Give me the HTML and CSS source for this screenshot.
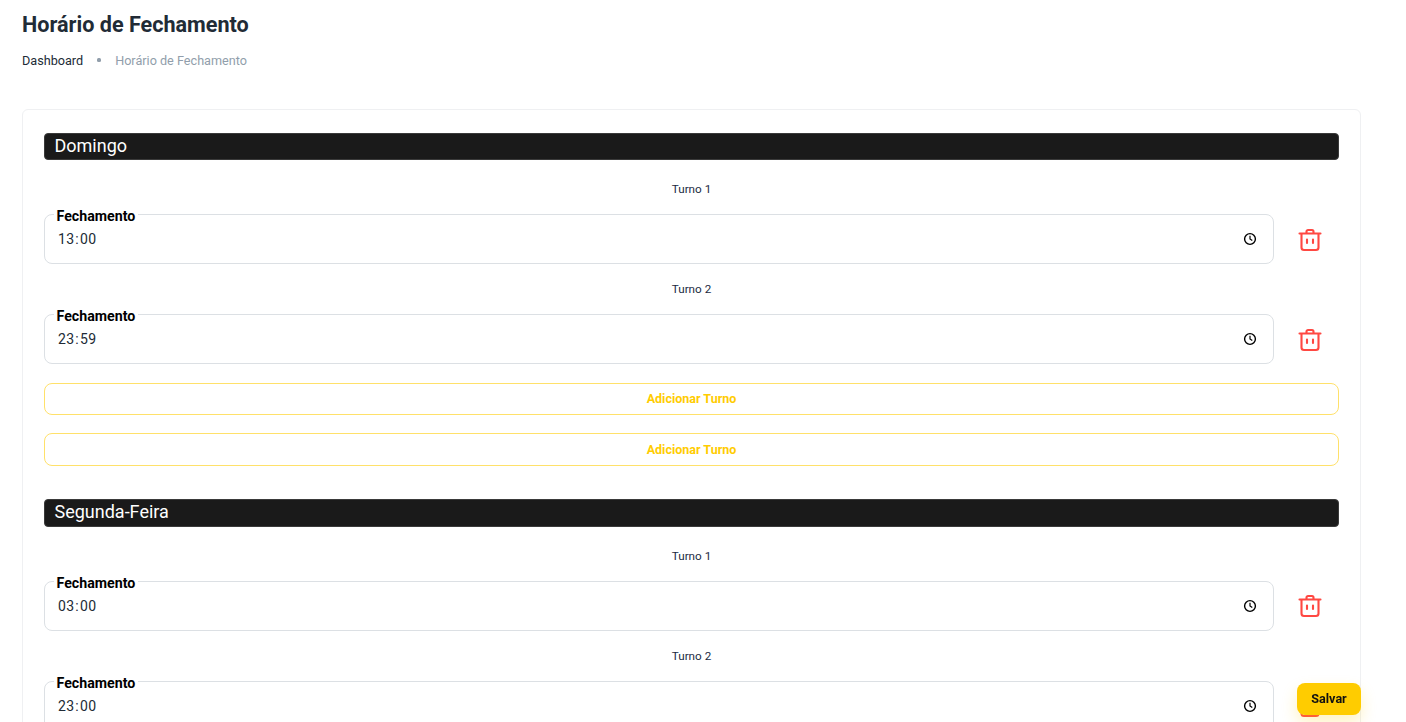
FILE: index.html
```html
<!DOCTYPE html>
<html lang="pt-BR">
<head>
<meta charset="utf-8">
<title>Horário de Fechamento</title>
<link rel="stylesheet" href="styles.css">
</head>
<body>
<svg class="defs" width="0" height="0" aria-hidden="true">
  <symbol id="trash" viewBox="0 0 24 24">
    <path d="M1.5 5.5h21M8.5 5.5V3.5c0-.8.7-1.5 1.5-1.5h4c.8 0 1.5.7 1.5 1.5v2M3.5 5.5v14c0 1.4 1.1 2.5 2.5 2.5h12c1.4 0 2.5-1.1 2.5-2.5v-14M9 11.5v3.5M15 11.5v3.5" fill="none" stroke="currentColor" stroke-width="2.1" stroke-linecap="round" stroke-linejoin="round"/>
  </symbol>
  <symbol id="clock" viewBox="0 0 14 14">
    <circle cx="7" cy="7" r="5.4" fill="none" stroke="currentColor" stroke-width="1.4"/>
    <path d="M7 3.8V7l2.3 1.6" fill="none" stroke="currentColor" stroke-width="1.2"/>
  </symbol>
</svg>
<main class="page">
  <h1 class="title">Horário de Fechamento</h1>
  <nav class="crumbs"><span class="crumb-link">Dashboard</span><span class="crumb-dot"></span><span class="crumb-current">Horário de Fechamento</span></nav>
  <section class="card">
    <div class="day">
      <h2 class="day-name">Domingo</h2>
      <p class="shift">Turno 1</p>
      <div class="row">
        <div class="field"><span class="field-label">Fechamento</span><span class="time">13<span class="sep">:</span>00</span><svg class="clock"><use href="#clock"/></svg></div>
        <button class="del" type="button" aria-label="Excluir"><svg class="trash"><use href="#trash"/></svg></button>
      </div>
      <p class="shift">Turno 2</p>
      <div class="row">
        <div class="field"><span class="field-label">Fechamento</span><span class="time">23<span class="sep">:</span>59</span><svg class="clock"><use href="#clock"/></svg></div>
        <button class="del" type="button" aria-label="Excluir"><svg class="trash"><use href="#trash"/></svg></button>
      </div>
      <button class="add" type="button">Adicionar Turno</button>
      <button class="add" type="button">Adicionar Turno</button>
    </div>
    <div class="day">
      <h2 class="day-name">Segunda-Feira</h2>
      <p class="shift">Turno 1</p>
      <div class="row">
        <div class="field"><span class="field-label">Fechamento</span><span class="time">03<span class="sep">:</span>00</span><svg class="clock"><use href="#clock"/></svg></div>
        <button class="del" type="button" aria-label="Excluir"><svg class="trash"><use href="#trash"/></svg></button>
      </div>
      <p class="shift">Turno 2</p>
      <div class="row">
        <div class="field"><span class="field-label">Fechamento</span><span class="time">23<span class="sep">:</span>00</span><svg class="clock"><use href="#clock"/></svg></div>
        <button class="del" type="button" aria-label="Excluir"><svg class="trash"><use href="#trash"/></svg></button>
      </div>
    </div>
  </section>
  <button class="save" type="button">Salvar</button>
</main>
</body>
</html>
```
FILE: styles.css
```css
* { box-sizing: border-box; }
html, body { margin: 0; height: 100%; overflow: hidden; background: #fff; }
body { font-family: Roboto, "Liberation Sans", sans-serif; color: #212b36; }
.defs { position: absolute; }
.page { padding: 10px 45px 0 22px; }
.title { margin: 0; font-size: 21.6px; line-height: 30px; font-weight: 700; color: #212b36; }
.crumbs { display: flex; align-items: center; margin-top: 11px; height: 18px; font-size: 12.65px; }
.crumb-link { color: #212b36; }
.crumb-dot { width: 4px; height: 4px; border-radius: 1.5px; background: #919eab; margin: 0 14px; }
.crumb-current { color: #919eab; }
.card { margin-top: 40px; padding: 22.7px 21px; border: 1px solid #eff0f2; border-radius: 6px; background: #fff; }
.day { display: flex; flex-direction: column; }
.day + .day { margin-top: 32.9px; }
.day-name { margin: 0 0 4px; height: 27.6px; padding-left: 9.5px; font-size: 18px; line-height: 23px; font-weight: 400; color: #fff; background: #1a1a1a; border: 1px solid #3a3a3a; border-radius: 4px; }
.shift { margin: 19px 0 0; height: 16px; font-size: 11.7px; line-height: 13px; text-align: center; color: #1c2b3f; }
.shift + .row { margin-top: 15px; }
.row { display: flex; align-items: center; }
.field { position: relative; flex: 1; display: flex; align-items: center; justify-content: space-between; height: 50px; padding: 0 16px 0 13px; border: 1px solid #dce0e4; border-radius: 8px; }
.field-label { position: absolute; left: 8.5px; top: -7px; padding: 0 3px; font-size: 14.2px; line-height: 16px; font-weight: 700; color: #000; background: #fff; }
.time { font-size: 14px; letter-spacing: 0.3px; color: #212b36; }
.sep { margin: 0 1px; }
.clock { width: 14px; height: 14px; color: #000; }
.del { width: 65px; height: 50px; padding: 1px 0 0 6px; display: flex; align-items: center; justify-content: center; border: 0; background: none; color: #ff4842; }
.trash { width: 24px; height: 24px; }
.add { height: 32px; margin-top: 18.7px; padding: 0; font: 700 12.5px Roboto, "Liberation Sans", sans-serif; color: #ffcc00; background: #fff; border: 1px solid #ffe16a; border-radius: 8px; }
.add + .add { margin-top: 18.3px; height: 33px; }
.save { position: fixed; left: 1297px; top: 683px; width: 64px; height: 32px; padding: 0 0 1px; font: 700 12.6px Roboto, "Liberation Sans", sans-serif; color: #111; background: #ffcc00; border: 0; border-radius: 8px; box-shadow: 0 8px 16px rgba(255, 204, 0, 0.24); }
```
